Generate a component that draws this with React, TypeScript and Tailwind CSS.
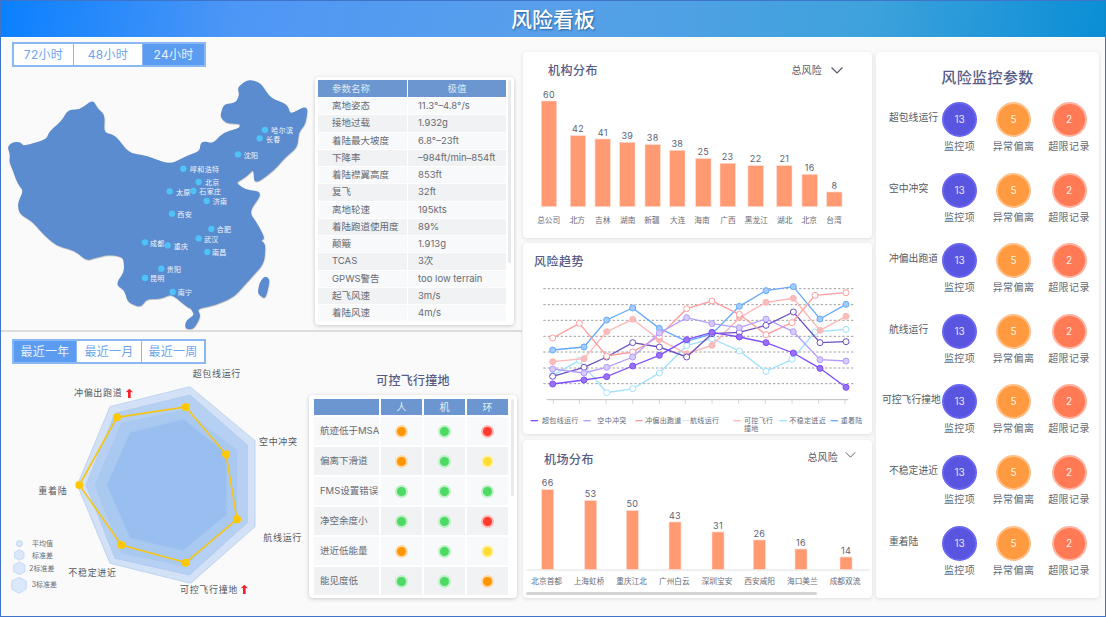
import React from "react";

const mainland = [
  [25, 440], [40, 428], [60, 428], [70, 440], [140, 420], [150, 395], [185, 365], [205, 332], [240, 330], [278, 302], [290, 325], [312, 345], [310, 398], [345, 408], [385, 460], [440, 470], [510, 495], [560, 470], [600, 455], [605, 425], [640, 432], [670, 400], [720, 385], [722, 370], [680, 368], [662, 350], [672, 315], [708, 310], [720, 285], [715, 262], [745, 240], [780, 250], [810, 295], [860, 315], [870, 345], [922, 318], [915, 370], [895, 395], [890, 440], [855, 470], [820, 510], [765, 550], [762, 505], [735, 530], [705, 548], [735, 570], [785, 578], [745, 635], [775, 680], [792, 715], [780, 720], [795, 735], [790, 790], [745, 840], [700, 890], [640, 915], [590, 925], [600, 950], [580, 985], [558, 985], [558, 965], [585, 945], [575, 925], [560, 918], [515, 880], [480, 895], [440, 895], [420, 920], [385, 905], [375, 870], [350, 852], [375, 815], [372, 770], [330, 762], [290, 770], [260, 780], [225, 750], [170, 735], [130, 700], [100, 665], [60, 640], [55, 610], [72, 572], [55, 550], [40, 510], [30, 485], [32, 465],
];
const taiwan = [[795, 830], [808, 840], [795, 895], [775, 880], [780, 850]];

// rounds each corner of a traced outline
function roundedPath(pts: number[][]) {
  const n = pts.length;
  const mix = (a: number[], b: number[], t: number) => `${a[0] + (b[0] - a[0]) * t} ${a[1] + (b[1] - a[1]) * t}`;
  let d = `M${mix(pts[0], pts[1], 0.35)}`;
  for (let i = 1; i <= n; i++) {
    const p = pts[i % n];
    d += ` L${mix(p, pts[i - 1], 0.35)} Q${p[0]} ${p[1]} ${mix(p, pts[(i + 1) % n], 0.35)}`;
  }
  return d + " Z";
}

const cities = [
  { name: "哈尔滨", x: 795, y: 390, tx: 814 },
  { name: "长春", x: 779, y: 415, tx: 798 },
  { name: "沈阳", x: 714, y: 463, tx: 731 },
  { name: "呼和浩特", x: 550, y: 506, tx: 570 },
  { name: "北京", x: 596, y: 546, tx: 615 },
  { name: "太原", x: 509, y: 574, tx: 528 },
  { name: "石家庄", x: 580, y: 573, tx: 598 },
  { name: "济南", x: 620, y: 603, tx: 638 },
  { name: "西安", x: 516, y: 641, tx: 532 },
  { name: "合肥", x: 634, y: 687, tx: 650 },
  { name: "武汉", x: 596, y: 715, tx: 612 },
  { name: "成都", x: 435, y: 727, tx: 450 },
  { name: "重庆", x: 503, y: 736, tx: 521 },
  { name: "南昌", x: 622, y: 756, tx: 636 },
  { name: "贵阳", x: 484, y: 806, tx: 500 },
  { name: "昆明", x: 435, y: 834, tx: 450 },
  { name: "南宁", x: 518, y: 876, tx: 533 },
];

const params = [
  ["离地姿态", "11.3°–4.8°/s"],
  ["接地过载", "1.932g"],
  ["着陆最大坡度", "6.8°–23ft"],
  ["下降率", "–984ft/min–854ft"],
  ["着陆襟翼高度", "853ft"],
  ["复飞", "32ft"],
  ["离地轮速", "195kts"],
  ["着陆跑道使用度", "89%"],
  ["颠簸", "1.913g"],
  ["TCAS", "3次"],
  ["GPWS警告", "too low terrain"],
  ["起飞风速", "3m/s"],
  ["着陆风速", "4m/s"],
];

const O = "bg-[#ff9500] ring-[#ffd9a6]";
const G = "bg-[#4cd964] ring-[#bdf0c6]";
const R = "bg-[#ff3b30] ring-[#ffb8b3]";
const Y = "bg-[#ffdd33] ring-[#fff2b0]";

const hazards = [
  { name: "航迹低于MSA", dots: [O, G, R] },
  { name: "偏离下滑道", dots: [O, G, Y] },
  { name: "FMS设置错误", dots: [G, G, G] },
  { name: "净空余度小", dots: [G, G, R] },
  { name: "进近低能量", dots: [O, G, Y] },
  { name: "能见度低", dots: [G, G, O] },
];

const orgBars = [
  { v: 60, l: "总公司", x: 64, top: 168, lx: 86 },
  { v: 42, l: "北方", x: 151, top: 272, lx: 172 },
  { v: 41, l: "吉林", x: 225, top: 282, lx: 248 },
  { v: 39, l: "湖南", x: 299, top: 292, lx: 323 },
  { v: 38, l: "新疆", x: 375, top: 299, lx: 396 },
  { v: 38, l: "大连", x: 449, top: 316, lx: 473 },
  { v: 25, l: "海南", x: 527, top: 341, lx: 546 },
  { v: 23, l: "广西", x: 600, top: 355, lx: 624 },
  { v: 22, l: "黑龙江", x: 684, top: 362, lx: 709 },
  { v: 21, l: "湖北", x: 770, top: 362, lx: 794 },
  { v: 16, l: "北京", x: 846, top: 388, lx: 868 },
  { v: 8, l: "台湾", x: 920, top: 441, lx: 942 },
];

const airportBars = [
  { v: 66, l: "北京首都", x: 65, top: 164, lx: 80 },
  { v: 53, l: "上海虹桥", x: 194, top: 197, lx: 207 },
  { v: 50, l: "重庆江北", x: 319, top: 227, lx: 335 },
  { v: 43, l: "广州白云", x: 447, top: 261, lx: 463 },
  { v: 31, l: "深圳宝安", x: 576, top: 291, lx: 591 },
  { v: 26, l: "西安咸阳", x: 700, top: 315, lx: 719 },
  { v: 16, l: "海口美兰", x: 825, top: 342, lx: 847 },
  { v: 14, l: "成都双流", x: 960, top: 366, lx: 975 },
];

const xs = [98, 192, 260, 338, 418, 500, 576, 658, 738, 820, 900, 978];
const xsAlt = [98, 178, 260, 338, 418, 500, 576, 658, 738, 816, 885, 978];

const series = [
  { color: "#66aaff", fill: "#a3ccff", px: xs, ys: [329, 320, 239, 203, 264, 303, 281, 198, 151, 139, 236, 192] },
  { color: "#9fe2ff", fill: "#ffffff", px: xsAlt, ys: [405, 360, 457, 445, 398, 316, 295, 332, 393, 357, 275, 267] },
  { color: "#ffb5b5", fill: "#f7bcbc", px: xs, ys: [364, 355, 274, 237, 298, 340, 315, 232, 186, 174, 270, 228] },
  { color: "#6a4fc0", fill: "#ffffff", px: xs, ys: [408, 381, 350, 307, 320, 350, 280, 276, 255, 215, 307, 304] },
  { color: "#ff9d9d", fill: "#ffffff", px: xsAlt, ys: [293, 249, 347, 335, 288, 205, 182, 222, 283, 247, 165, 157] },
  { color: "#b39dff", fill: "#d6caff", px: xs, ys: [386, 398, 381, 350, 278, 232, 250, 262, 236, 274, 358, 362] },
  { color: "#7c4dff", fill: "#9b72f5", px: xs, ys: [431, 419, 409, 377, 345, 298, 276, 290, 307, 338, 384, 441] },
];

const legend = [
  { name: "超包线运行", color: "#7c4dff", lx: 32, tx: 66 },
  { name: "空中冲突", color: "#b39dff", lx: 190, tx: 232 },
  { name: "冲偏出跑道", color: "#ff9d9d", lx: 346, tx: 375 },
  { name: "航线运行", color: "#e6e0ff", lx: 486, tx: 510 },
  { name: "可控飞行", color: "#ffb5b5", lx: 640, tx: 672 },
  { name: "不稳定进近", color: "#9fe2ff", lx: 778, tx: 808 },
  { name: "重着陆", color: "#66aaff", lx: 932, tx: 962 },
];

const radarLayers = [
  { points: "570,170 765,332 765,590 572,760 330,700 232,465 330,230", fill: "#d2e1f6" },
  { points: "570,195 742,345 742,578 568,735 345,685 258,465 345,250", fill: "#b6d0f3" },
  { points: "552,240 710,360 710,565 555,708 365,670 285,465 365,280", fill: "#a9c9f1" },
  { points: "550,267 680,370 680,555 548,662 390,625 320,465 390,307", fill: "#98bff0" },
];

const radarData = [
  [557, 231],
  [678, 373],
  [711, 568],
  [557, 698],
  [364, 645],
  [238, 465],
  [351, 262],
];

const radarLabels = [
  { t: "超包线运行", x: 578, y: 142 },
  { t: "空中冲突", x: 777, y: 344 },
  { t: "航线运行", x: 790, y: 633 },
  { t: "可控飞行撞地", x: 540, y: 789 },
  { t: "不稳定进近", x: 205, y: 739 },
  { t: "重着陆", x: 115, y: 491 },
  { t: "冲偏出跑道", x: 222, y: 199 },
];

const monitors = ["超包线运行", "空中冲突", "冲偏出跑道", "航线运行", "可控飞行撞地", "不稳定进近", "重着陆"];

function Tabs({ items, widths, active }: { items: string[]; widths: string[]; active: number }) {
  return (
    <div className="ml-[11px] flex h-[25px] w-[194px] border-2 border-[#8ab8f5]">
      {items.map((t, i) => (
        <div
          key={t}
          className={`flex items-center justify-center text-[12px] tracking-[0.3px] ${widths[i]} ${i > 0 ? "border-l border-[#8ab8f5]" : ""} ${
            i === active ? "bg-[#5b9bf0] text-[#e8f1fd]" : "bg-white text-[#6ea4f0]"
          }`}
        >
          {t}
        </div>
      ))}
    </div>
  );
}

function Chevron({ className }: { className: string }) {
  return (
    <svg viewBox="0 0 12 7" className={className} fill="none" stroke="#4f5566" strokeWidth="1.1">
      <polyline points="0.5,0.5 6,6 11.5,0.5" />
    </svg>
  );
}

function RedArrow({ x, y }: { x: number; y: number }) {
  return (
    <path
      d={`M${x} ${y - 14} L${x + 11} ${y - 3} L${x + 4} ${y - 4} L${x + 4} ${y + 14} L${x - 4} ${y + 14} L${x - 4} ${y - 4} L${x - 11} ${y - 3} Z`}
      fill="#f5222d"
    />
  );
}

function Bars({
  bars,
  barW,
  bottom,
  labelY,
}: {
  bars: { v: number; l: string; x: number; top: number; lx: number }[];
  barW: number;
  bottom: number;
  labelY: number;
}) {
  return (
    <>
      {bars.map((b) => (
        <g key={b.l}>
          <rect x={b.x} y={b.top} width={barW} height={bottom - b.top} fill="#ff9a73" stroke="#ffd9cc" strokeWidth="2" />
          <text x={b.x + barW / 2} y={b.top - 10} textAnchor="middle" fontSize="27" letterSpacing="1" fill="#5d6270">
            {b.v}
          </text>
          <text x={b.lx} y={labelY} textAnchor="middle" fontSize="23" fill="#666b78">
            {b.l}
          </text>
        </g>
      ))}
    </>
  );
}

function Metric({ value, label, circle, width }: { value: string; label: string; circle: string; width: string }) {
  return (
    <div className={`flex flex-col items-center ${width}`}>
      <div className={`flex h-[35px] w-[35px] items-center justify-center rounded-full border-2 text-[10px] ${circle}`}>{value}</div>
      <div className="mt-[2px] text-[10px] leading-[14px] tracking-[0.4px] whitespace-nowrap text-[#666a72]">{label}</div>
    </div>
  );
}

export default function App() {
  return (
    <div className="flex h-[617px] w-[1106px] flex-col overflow-hidden border border-[#3f74c9] bg-[#fafafa] font-['Inter','Noto_Sans_CJK_SC',sans-serif]">
      {/* Header */}
      <header className="flex h-[37px] shrink-0 items-center justify-center border-b border-white bg-[linear-gradient(100deg,#0a80ff_0%,#4f97f5_22%,#58a0ea_50%,#3fa2dc_78%,#0a8ed6_100%)]">
        <h1 className="text-[21px] leading-none font-medium text-white [text-shadow:1px_1px_2px_rgba(0,40,90,0.55)]">风险看板</h1>
      </header>

      <main className="flex min-h-0 flex-1">
        {/* Left column */}
        <div className="flex w-[521px] shrink-0 flex-col">
          <section className="h-[294px] shrink-0 border-b-2 border-[#dcdcdc] pt-[4px]">
            <Tabs items={["72小时", "48小时", "24小时"]} widths={["w-[59px]", "w-[69px]", "w-[62px]"]} active={2} />
            <div className="mt-[10px] flex">
              <svg viewBox="3 231 939 759" className="h-[253px] w-[313px] shrink-0 overflow-visible">
                <g fill="#5b8ccf" stroke="#5b8ccf" strokeWidth="4" strokeLinejoin="round" className="drop-shadow-[1px_2px_2px_rgba(0,0,0,0.3)]">
                  <path d={roundedPath(mainland)} />
                  <path d={roundedPath(taiwan)} />
                </g>
                {cities.map((c) => (
                  <g key={c.name}>
                    <circle cx={c.x} cy={c.y} r="9.5" fill="#4fc3f7" />
                    <text x={c.tx} y={c.y + 10} fontSize="21" letterSpacing="1" fill="#f2f6fc">
                      {c.name}
                    </text>
                  </g>
                ))}
              </svg>
              <div className="relative ml-[1px] h-[248px] w-[199px] shrink-0 rounded-sm bg-white pt-[3px] pl-[3px] shadow-[0_1px_4px_rgba(0,0,0,0.2)]">
                <div className="grid grid-cols-[89px_98px] gap-[1px] text-[9.5px] leading-[16.27px] text-[#666a72]">
                  <div className="h-[17px] bg-[#6b96cf] pl-[14px] leading-[17px] text-[#dfe8f5]">参数名称</div>
                  <div className="h-[17px] bg-[#6b96cf] text-center leading-[17px] text-[#dfe8f5]">极值</div>
                  {params.map(([k, v], i) => (
                    <React.Fragment key={k}>
                      <div className={`h-[16.27px] pl-[14px] ${i % 2 === 0 ? "bg-[#f8f9fb]" : "bg-[#f1f2f4]"}`}>{k}</div>
                      <div className={`h-[16.27px] pl-[10px] ${i % 2 === 0 ? "bg-[#f8f9fb]" : "bg-[#f1f2f4]"}`}>{v}</div>
                    </React.Fragment>
                  ))}
                </div>
                <div className="absolute top-[3px] right-[3px] h-[183px] w-[3px] rounded-full bg-[#e9eaec]" />
              </div>
            </div>
          </section>

          <section className="flex min-h-0 flex-1">
            <div className="w-[308px] shrink-0 pt-[7px]">
              <Tabs items={["最近一年", "最近一月", "最近一周"]} widths={["w-[62px]", "w-[65px]", "w-[63px]"]} active={0} />
              <svg viewBox="3 102 924 750" className="h-[250px] w-[308px]">
                {radarLayers.map((l) => (
                  <polygon key={l.fill} points={l.points} fill={l.fill} stroke="#a9c7ef" strokeWidth="2" />
                ))}
                <polygon points={radarData.map((p) => p.join(",")).join(" ")} fill="none" stroke="#f5c518" strokeWidth="5" />
                {radarData.map((p) => (
                  <circle key={p[0]} cx={p[0]} cy={p[1]} r="12" fill="#ffc800" />
                ))}
                {radarLabels.map((l) => (
                  <text key={l.t} x={l.x} y={l.y} fontSize="27" letterSpacing="2" fill="#55595f">
                    {l.t}
                  </text>
                ))}
                <RedArrow x={388} y={190} />
                <RedArrow x={733} y={778} />
                <circle cx="58" cy="641" r="9" fill="#dbe8fa" stroke="#a9c9f2" strokeWidth="2" />
                <polygon points="58,659 72,667 72,683 58,691 44,683 44,667" fill="#dbe8fa" stroke="#b5d0f4" strokeWidth="2" />
                <polygon points="58,696 75,705 75,725 58,734 41,725 41,705" fill="#dbe8fa" stroke="#b5d0f4" strokeWidth="2" />
                <polygon points="57,742 79,753 79,777 57,790 35,777 35,753" fill="#dbe8fa" stroke="#b5d0f4" strokeWidth="2" />
                <text x="96" y="648" fontSize="21" fill="#666b78">平均值</text>
                <text x="96" y="683" fontSize="21" fill="#666b78">标准差</text>
                <text x="88" y="722" fontSize="21" fill="#666b78">2标准差</text>
                <text x="95" y="772" fontSize="21" fill="#666b78">3标准差</text>
              </svg>
            </div>

            <div className="w-[208px] shrink-0 pt-[41px]">
              <h2 className="h-[22px] text-center text-[12px] leading-[16px] font-medium tracking-[0.3px] text-[#565c85]">可控飞行撞地</h2>
              <div className="relative h-[203px] rounded-sm bg-white pt-[4px] pl-[5px] shadow-[0_1px_4px_rgba(0,0,0,0.2)]">
                <div className="grid grid-cols-[65px_41px_41px_41px] gap-[2px] text-[9.5px] text-[#666a72]">
                  <div className="h-[16px] bg-[#6b96cf]" />
                  {["人", "机", "环"].map((h) => (
                    <div key={h} className="flex h-[16px] items-center justify-center bg-[#6b96cf] text-[10px] text-[#e6eef8]">
                      {h}
                    </div>
                  ))}
                  {hazards.map((row, i) => (
                    <React.Fragment key={row.name}>
                      <div className={`flex h-[28px] items-center pl-[6px] whitespace-nowrap ${i % 2 === 0 ? "bg-[#f8f9fb]" : "bg-[#f1f2f4]"}`}>{row.name}</div>
                      {row.dots.map((d, j) => (
                        <div key={j} className={`flex h-[28px] items-center justify-center ${i % 2 === 0 ? "bg-[#f8f9fb]" : "bg-[#f1f2f4]"}`}>
                          <span className={`h-[9px] w-[9px] rounded-full ring-2 ${d}`} />
                        </div>
                      ))}
                    </React.Fragment>
                  ))}
                </div>
                <div className="absolute top-[4px] right-[3px] h-[97px] w-[3px] rounded-full bg-[#e9eaec]" />
              </div>
            </div>
          </section>
        </div>

        {/* Middle column */}
        <div className="ml-[1px] flex w-[349px] shrink-0 flex-col pt-[14px]">
          <div className="relative h-[186px] rounded-sm bg-white shadow-[0_1px_4px_rgba(0,0,0,0.12)]">
            <div className="flex h-[34px] items-center pt-[3px] pl-[25px]">
              <h2 className="text-[12px] font-medium tracking-[0.5px] text-[#565c85]">机构分布</h2>
              <span className="ml-auto text-[10px] tracking-[0.2px] text-[#555a68]">总风险</span>
              <Chevron className="mr-[29px] ml-[9px] h-[7px] w-[12px]" />
            </div>
            <svg viewBox="9 123 1047 456" className="h-[152px] w-[349px]">
              <Bars bars={orgBars} barW={46} bottom={485} labelY={533} />
            </svg>
          </div>

          <div className="mt-[5px] h-[191px] rounded-sm bg-white shadow-[0_1px_4px_rgba(0,0,0,0.12)]">
            <h2 className="h-[34px] pt-[11px] pl-[11px] text-[12px] leading-[16px] font-medium tracking-[0.5px] text-[#565c85]">风险趋势</h2>
            <svg viewBox="9 110 1047 471" className="h-[157px] w-[349px]">
              {[145, 193, 240, 288, 335, 383, 430].map((y) => (
                <line key={y} x1="70" x2="1005" y1={y} y2={y} stroke="#a0a0a0" strokeWidth="3" strokeDasharray="7 6" />
              ))}
              <line x1="80" x2="985" y1="478" y2="478" stroke="#bdbdbd" strokeWidth="3" />
              {[100, 178, 258, 338, 418, 496, 576, 656, 736, 816, 896, 975].map((x) => (
                <line key={x} x1={x} x2={x} y1="478" y2="490" stroke="#bdbdbd" strokeWidth="2" />
              ))}
              {series.map((s) => (
                <g key={s.color}>
                  <polyline points={s.ys.map((y, i) => `${s.px[i]},${y}`).join(" ")} fill="none" stroke={s.color} strokeWidth="4" />
                  {s.ys.map((y, i) => (
                    <circle key={i} cx={s.px[i]} cy={y} r="9" fill={s.fill} stroke={s.color} strokeWidth="3" />
                  ))}
                </g>
              ))}
              {legend.map((l) => (
                <g key={l.name}>
                  <line x1={l.lx} x2={l.lx + 22} y1="541" y2="541" stroke={l.color} strokeWidth="4" />
                  <text x={l.tx} y="549" fontSize="21" letterSpacing="1" fill="#666b78">
                    {l.name}
                  </text>
                </g>
              ))}
              <text x="672" y="571" fontSize="21" letterSpacing="1" fill="#666b78">撞地</text>
            </svg>
          </div>

          <div className="relative mt-[6px] h-[158px] rounded-sm bg-white shadow-[0_1px_4px_rgba(0,0,0,0.12)]">
            <div className="flex h-[34px] items-start pt-[12px] pl-[21px]">
              <h2 className="text-[12px] leading-[16px] font-medium tracking-[0.5px] text-[#565c85]">机场分布</h2>
              <span className="mt-[-3px] ml-auto text-[10px] leading-[16px] tracking-[0.2px] text-[#555a68]">总风险</span>
              <Chevron className="mt-[0px] mr-[16px] ml-[7px] h-[6px] w-[11px]" />
            </div>
            <svg viewBox="9 117 1047 354" className="h-[118px] w-[349px]">
              <line x1="20" x2="1048" y1="405" y2="405" stroke="#e0e0e0" strokeWidth="3" />
              <Bars bars={airportBars} barW={36} bottom={403} labelY={448} />
            </svg>
            <div className="mx-[3px] h-[3px] w-[291px] rounded-full bg-[#d4d4d4]" />
          </div>
        </div>

        {/* Right column */}
        <aside className="mt-[14px] mb-[18px] ml-[4px] w-[223px] shrink-0 rounded-sm bg-white shadow-[0_1px_4px_rgba(0,0,0,0.12)]">
          <h2 className="pt-[17px] text-center text-[15px] leading-[18px] font-medium tracking-[0.4px] text-[#565c85]">风险监控参数</h2>
          <div className="mt-[15px] flex flex-col">
            {monitors.map((name) => (
              <div key={name} className="flex h-[70.6px] pl-[13px]">
                <div className="w-[44px] pt-[9px] text-[9.8px] leading-[14px] whitespace-nowrap text-[#55595f]">
                  <span className={name === "可控飞行撞地" ? "-ml-[7px]" : ""}>{name}</span>
                </div>
                <Metric width="w-[53px]" value="13" label="监控项" circle="bg-[#5a55e0] border-[#6a66f0] text-[#e6e6ff]" />
                <Metric width="w-[55px]" value="5" label="异常偏离" circle="bg-[#ff9a40] border-[#ffc089] text-[#fff2e5]" />
                <Metric width="w-[56px]" value="2" label="超限记录" circle="bg-[#ff7a55] border-[#ffb3a0] text-[#fff2ee]" />
              </div>
            ))}
          </div>
        </aside>
      </main>
    </div>
  );
}
